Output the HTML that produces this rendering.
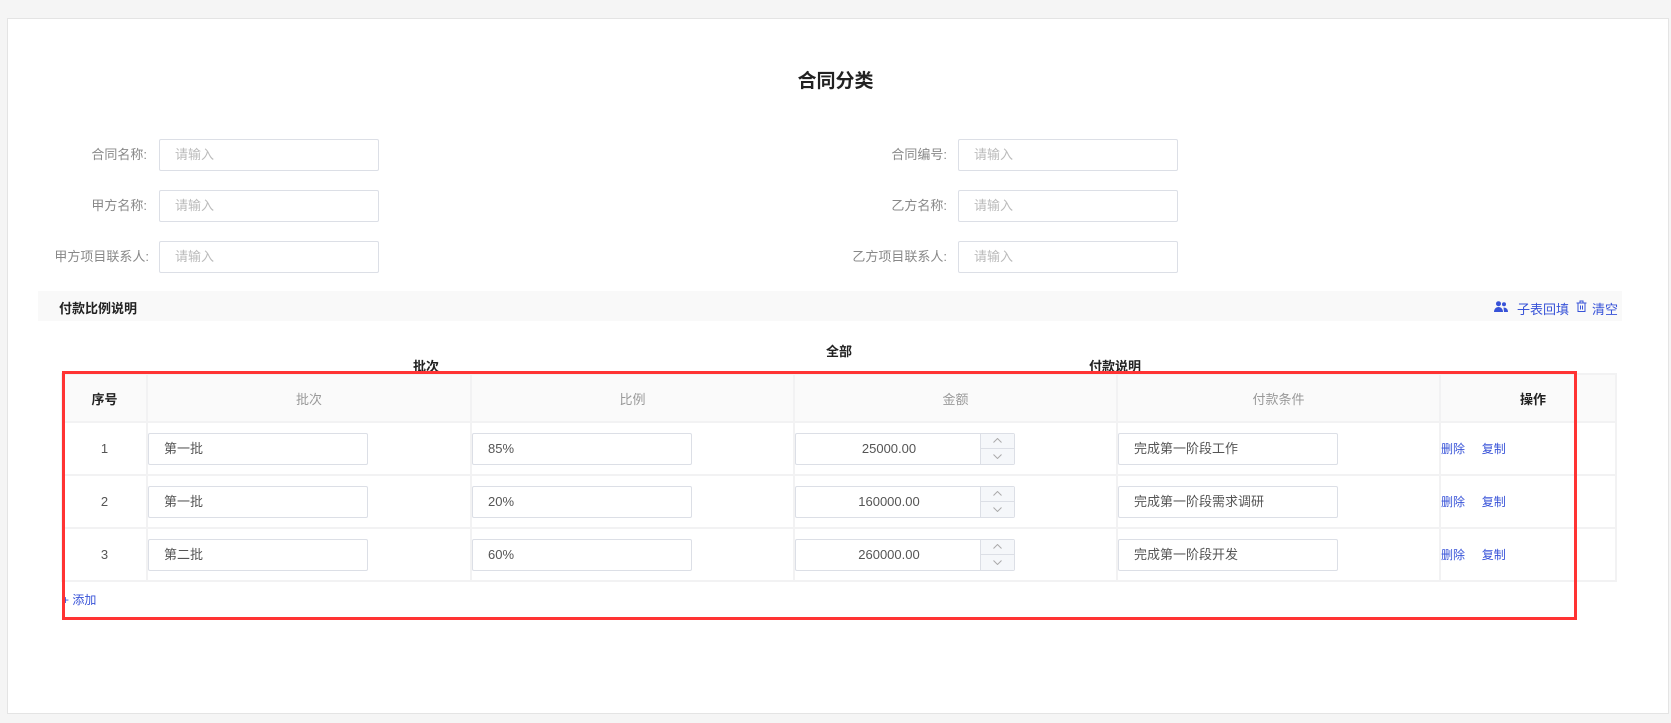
<!DOCTYPE html>
<html><head><meta charset="utf-8"><style>
*{box-sizing:border-box;margin:0;padding:0}
body{width:1671px;height:723px;background:#f5f5f5;font-family:"Liberation Sans","Noto Sans CJK SC",sans-serif;font-size:13px;color:#333;position:relative;overflow:hidden}
.card{position:absolute;left:7px;top:18px;width:1662px;height:696px;background:#fff;border:1px solid #e4e4e4}
.abs{position:absolute}
.title{left:0;width:1671px;top:66px;text-align:center;font-size:19px;font-weight:bold;color:#222}
.lbl{text-align:right;color:#888;width:160px;line-height:32px}
.inp{width:220px;height:32px;border:1px solid #dcdfe6;border-radius:2px;color:#bbb;line-height:30px;padding-left:15px;background:#fff}
.bar{left:38px;top:291px;width:1584px;height:30px;background:#f9f9f9}
.b{font-weight:bold;color:#222}
.blue{color:#3853d8}
table{position:absolute;left:61px;top:373px;border-collapse:collapse;width:1556px}
td,th{border:2px solid #f2f2f3;text-align:center;font-weight:normal}
th{height:48px;background:#fafafa;color:#999;font-size:13px}
td{height:53px;vertical-align:middle;color:#555}
td.l{text-align:left;padding-left:0}
.ci{width:220px;height:32px;border:1px solid #dcdfe6;border-radius:2px;text-align:left;padding-left:15px;line-height:30px;color:#555}
.num{width:220px;height:32px;border:1px solid #dcdfe6;border-radius:2px;position:relative;line-height:30px;color:#555}
.num .t{position:absolute;left:0;width:186px;text-align:center}
.num .s{position:absolute;right:0;top:0;width:34px;height:30px;border-left:1px solid #dcdfe6;background:#f5f7fa}
.num .s div{height:15px;display:flex;align-items:center;justify-content:center}
.num .s div:first-child{border-bottom:1px solid #dcdfe6}
.red{left:62px;top:371px;width:1515px;height:249px;border:3px solid #f33}
</style></head><body>
<div class="card"></div>
<div class="abs title">合同分类</div>

<div class="abs lbl" style="left:-13px;top:139px">合同名称:</div><div class="abs inp" style="left:159px;top:139px">请输入</div>
<div class="abs lbl" style="left:-13px;top:190px">甲方名称:</div><div class="abs inp" style="left:159px;top:190px">请输入</div>
<div class="abs lbl" style="left:-13px;top:241px;width:162px">甲方项目联系人:</div><div class="abs inp" style="left:159px;top:241px">请输入</div>
<div class="abs lbl" style="left:787px;top:139px">合同编号:</div><div class="abs inp" style="left:958px;top:139px">请输入</div>
<div class="abs lbl" style="left:787px;top:190px">乙方名称:</div><div class="abs inp" style="left:958px;top:190px">请输入</div>
<div class="abs lbl" style="left:787px;top:241px">乙方项目联系人:</div><div class="abs inp" style="left:958px;top:241px">请输入</div>

<div class="abs bar"></div>
<div class="abs b" style="left:59px;top:298px">付款比例说明</div>
<svg class="abs" style="left:1494px;top:301px" width="14" height="11" viewBox="0 0 14 11"><circle cx="4.5" cy="2.7" r="2.5" fill="#3853d8"/><path d="M0 11c0-3 2-5 4.5-5s4.5 2 4.5 5z" fill="#3853d8"/><circle cx="10" cy="3.2" r="2" fill="#3853d8"/><path d="M9.5 6.5c2.5 0 4.5 1.5 4.5 4.5h-4z" fill="#3853d8"/></svg>
<div class="abs blue" style="left:1517px;top:299px">子表回填</div>
<svg class="abs" style="left:1576px;top:300px" width="11" height="12" viewBox="0 0 11 12"><path d="M0.5 3h10M4 3V1h3v2M2 3v8.5h7V3M4.5 5.5v4M6.5 5.5v4" stroke="#3853d8" fill="none" stroke-width="1"/></svg>
<div class="abs blue" style="left:1592px;top:299px">清空</div>

<div class="abs b" style="left:826px;top:341px">全部</div>
<div class="abs b" style="left:413px;top:356px">批次</div>
<div class="abs b" style="left:1089px;top:356px">付款说明</div>

<table>
<tr><th style="width:85px;color:#222;font-weight:bold">序号</th><th style="width:324px">批次</th><th style="width:323px">比例</th><th style="width:323px">金额</th><th style="width:323px">付款条件</th><th style="color:#222;font-weight:bold;padding-left:10px">操作</th></tr>
<tr><td>1</td><td class="l"><div class="ci">第一批</div></td><td class="l"><div class="ci">85%</div></td><td class="l"><div class="num"><div class="t">25000.00</div><div class="s"><div><svg width="9" height="5"><path d="M0.5 4.5L4.5 0.5L8.5 4.5" stroke="#aaa" fill="none"/></svg></div><div><svg width="9" height="5"><path d="M0.5 0.5L4.5 4.5L8.5 0.5" stroke="#aaa" fill="none"/></svg></div></div></div></td><td class="l"><div class="ci">完成第一阶段工作</div></td><td class="l" style="font-size:12px"><span class="blue">删除</span>&nbsp;&nbsp;&nbsp;&nbsp;&nbsp;<span class="blue">复制</span></td></tr>
<tr><td>2</td><td class="l"><div class="ci">第一批</div></td><td class="l"><div class="ci">20%</div></td><td class="l"><div class="num"><div class="t">160000.00</div><div class="s"><div><svg width="9" height="5"><path d="M0.5 4.5L4.5 0.5L8.5 4.5" stroke="#aaa" fill="none"/></svg></div><div><svg width="9" height="5"><path d="M0.5 0.5L4.5 4.5L8.5 0.5" stroke="#aaa" fill="none"/></svg></div></div></div></td><td class="l"><div class="ci">完成第一阶段需求调研</div></td><td class="l" style="font-size:12px"><span class="blue">删除</span>&nbsp;&nbsp;&nbsp;&nbsp;&nbsp;<span class="blue">复制</span></td></tr>
<tr><td>3</td><td class="l"><div class="ci">第二批</div></td><td class="l"><div class="ci">60%</div></td><td class="l"><div class="num"><div class="t">260000.00</div><div class="s"><div><svg width="9" height="5"><path d="M0.5 4.5L4.5 0.5L8.5 4.5" stroke="#aaa" fill="none"/></svg></div><div><svg width="9" height="5"><path d="M0.5 0.5L4.5 4.5L8.5 0.5" stroke="#aaa" fill="none"/></svg></div></div></div></td><td class="l"><div class="ci">完成第一阶段开发</div></td><td class="l" style="font-size:12px"><span class="blue">删除</span>&nbsp;&nbsp;&nbsp;&nbsp;&nbsp;<span class="blue">复制</span></td></tr>
</table>
<div class="abs blue" style="left:62px;top:591px;font-size:12px">+ 添加</div>
<div class="abs red"></div>
</body></html>
